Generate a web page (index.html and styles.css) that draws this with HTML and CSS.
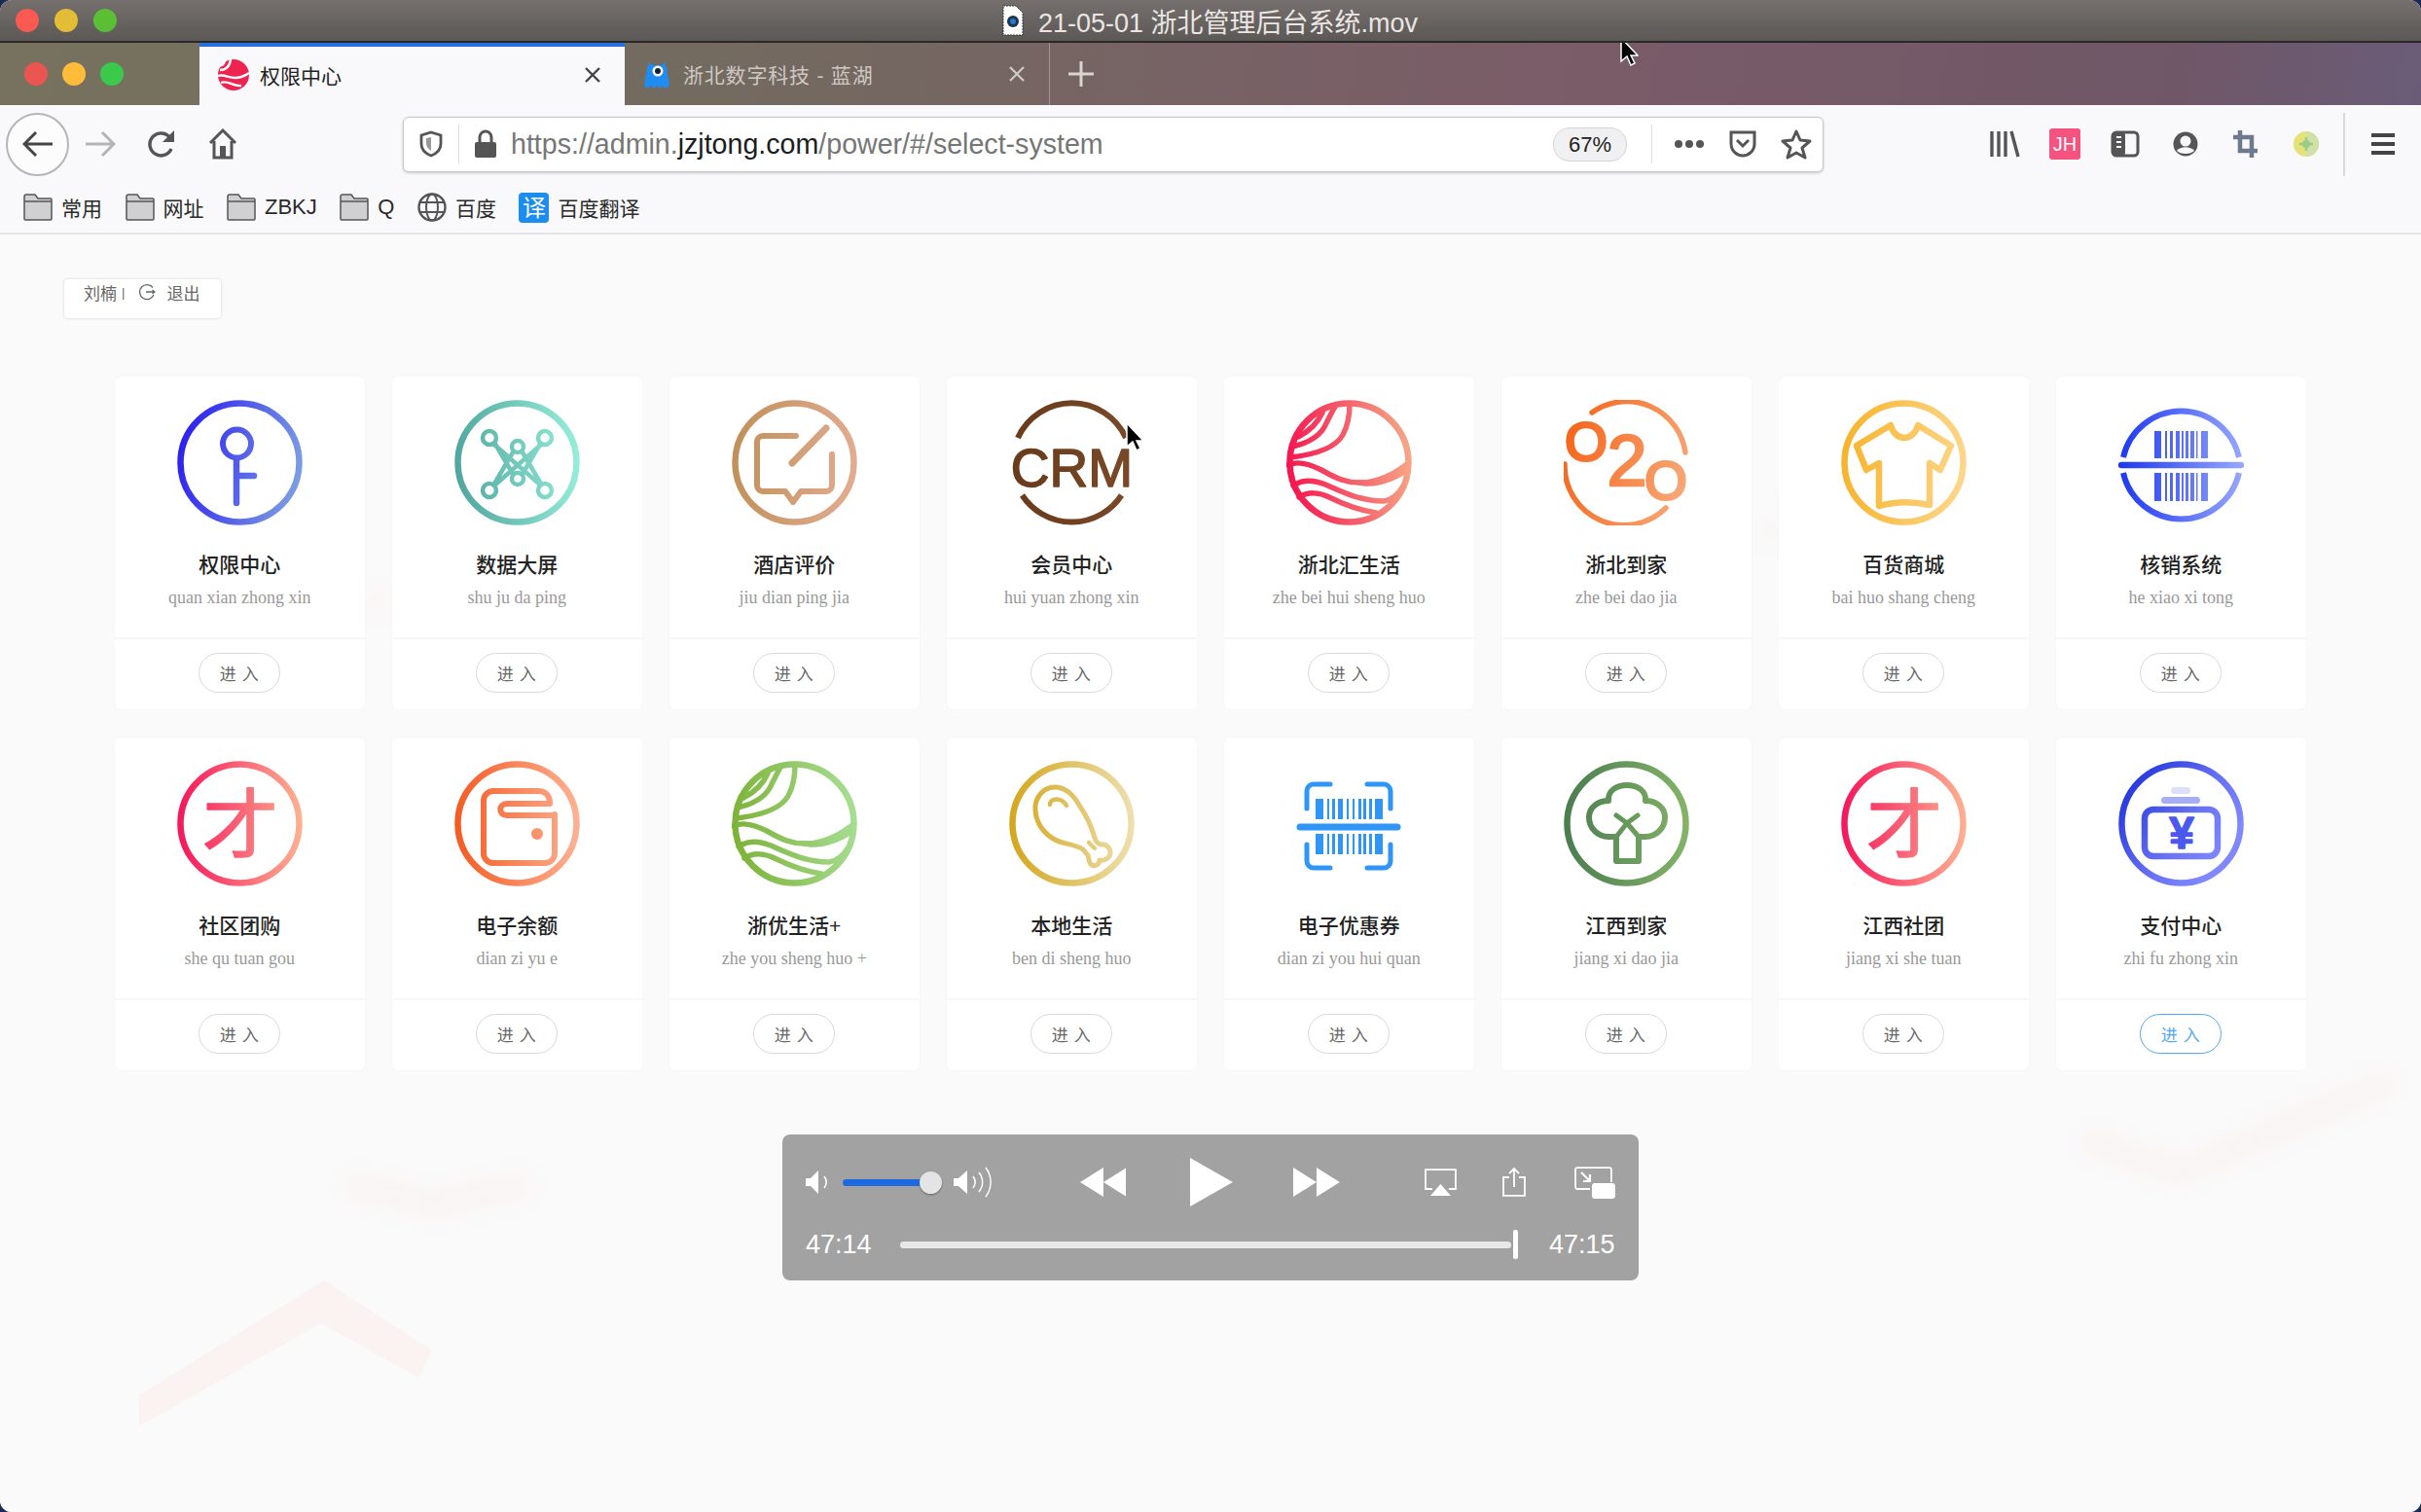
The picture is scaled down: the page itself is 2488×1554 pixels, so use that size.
FILE: index.html
```html
<!DOCTYPE html>
<html lang="en">

<head>
    <meta charset="UTF-8">
    <title>权限中心</title>
    <link rel="stylesheet" href="styles.css">
</head>

<body>
    <!-- shared gradients for the system icons -->
    <svg class="defs" width="0" height="0">
        <defs>
            <linearGradient id="g-key" gradientUnits="userSpaceOnUse" x1="0" y1="40" x2="129" y2="70"><stop offset="0" stop-color="#2a1cf0"/><stop offset="1" stop-color="#7c9ee2"/></linearGradient>
            <linearGradient id="g-teal" gradientUnits="userSpaceOnUse" x1="0" y1="60" x2="129" y2="50"><stop offset="0" stop-color="#50a69e"/><stop offset="1" stop-color="#96eeda"/></linearGradient>
            <linearGradient id="g-tan" gradientUnits="userSpaceOnUse" x1="0" y1="50" x2="129" y2="60"><stop offset="0" stop-color="#c09058"/><stop offset="1" stop-color="#e2ac92"/></linearGradient>
            <linearGradient id="g-red" gradientUnits="userSpaceOnUse" x1="0" y1="70" x2="129" y2="55"><stop offset="0" stop-color="#f5134f"/><stop offset="1" stop-color="#f6a886"/></linearGradient>
            <linearGradient id="g-orange" gradientUnits="userSpaceOnUse" x1="0" y1="40" x2="129" y2="80"><stop offset="0" stop-color="#f5651a"/><stop offset="1" stop-color="#f8a878"/></linearGradient>
            <linearGradient id="g-yellow" gradientUnits="userSpaceOnUse" x1="0" y1="50" x2="129" y2="60"><stop offset="0" stop-color="#f7b32a"/><stop offset="1" stop-color="#fdd78c"/></linearGradient>
            <linearGradient id="g-blue" gradientUnits="userSpaceOnUse" x1="0" y1="60" x2="129" y2="60"><stop offset="0" stop-color="#1c38f0"/><stop offset="1" stop-color="#98a8ff"/></linearGradient>
            <linearGradient id="g-pink" gradientUnits="userSpaceOnUse" x1="0" y1="60" x2="129" y2="60"><stop offset="0" stop-color="#f5155a"/><stop offset="1" stop-color="#ffb292"/></linearGradient>
            <linearGradient id="g-coral" gradientUnits="userSpaceOnUse" x1="0" y1="60" x2="129" y2="60"><stop offset="0" stop-color="#f45a22"/><stop offset="1" stop-color="#ffb294"/></linearGradient>
            <linearGradient id="g-green" gradientUnits="userSpaceOnUse" x1="0" y1="70" x2="129" y2="55"><stop offset="0" stop-color="#7cb236"/><stop offset="1" stop-color="#a8de94"/></linearGradient>
            <linearGradient id="g-gold" gradientUnits="userSpaceOnUse" x1="0" y1="60" x2="129" y2="60"><stop offset="0" stop-color="#d4a61c"/><stop offset="1" stop-color="#eee0b0"/></linearGradient>
            <linearGradient id="g-forest" gradientUnits="userSpaceOnUse" x1="0" y1="60" x2="129" y2="60"><stop offset="0" stop-color="#4a7c50"/><stop offset="1" stop-color="#84b468"/></linearGradient>
            <linearGradient id="g-indigo" gradientUnits="userSpaceOnUse" x1="10" y1="20" x2="110" y2="90"><stop offset="0" stop-color="#2236dc"/><stop offset="0.6" stop-color="#6670f4"/><stop offset="1" stop-color="#8088ff"/></linearGradient>
            <linearGradient id="g-crm" gradientUnits="userSpaceOnUse" x1="0" y1="60" x2="129" y2="60"><stop offset="0" stop-color="#683a1a"/><stop offset="1" stop-color="#7a4a28"/></linearGradient>
        </defs>
    </svg>

    <div class="window">
        <div class="titlebar">
            <span class="light red"></span>
            <span class="light yellow"></span>
            <span class="light green"></span>
            <svg class="movfile" viewBox="0 0 22 32" width="22" height="32">
                <path d="M1 1h13l7 7v23H1z" fill="#fff" stroke="#333" stroke-dasharray="2 1"/>
                <circle cx="11" cy="17" r="6" fill="#234"/>
                <circle cx="11" cy="17" r="3" fill="#1e78d8"/>
            </svg>
            <span class="filename">21-05-01 浙北管理后台系统.mov</span>
        </div>

        <div class="tabbar">
            <div class="lights">
                <span class="light t-red"></span>
                <span class="light t-yellow"></span>
                <span class="light t-green"></span>
            </div>
            <div class="tab active">
                <svg class="favicon" viewBox="0 0 32 32" width="32" height="32">
                    <circle cx="16" cy="16" r="16" fill="#ee2350"/>
                    <path d="M0 17c8-3 12 5 24 1 3-1 5-2 8-4M3 24c8-3 11 4 21 3M2 11c6 0 10-4 11-11M1 7c4-1 6-3 6-6" fill="none" stroke="#fff" stroke-width="2.4"/>
                </svg>
                <span class="tab-name">权限中心</span>
                <svg class="tab-close" viewBox="0 0 18 18" width="18" height="18"><path d="M2 2l14 14M16 2L2 16" stroke="#444" stroke-width="2.4"/></svg>
            </div>
            <div class="tab">
                <svg class="favicon" viewBox="0 0 28 32" width="28" height="32">
                    <path d="M6 4l3 3h10l3-3 2 6 3 18-4 3-3-3-3 3-3-3-3 3-3-3-4 3-3-3 3-18z" fill="#1e8cf0"/>
                    <circle cx="15" cy="13" r="5.5" fill="#fff"/>
                    <circle cx="15" cy="13" r="3" fill="#123"/>
                </svg>
                <span class="tab-name">浙北数字科技 - 蓝湖</span>
                <svg class="tab-close" viewBox="0 0 18 18" width="18" height="18"><path d="M2 2l14 14M16 2L2 16" stroke="#d0ccc8" stroke-width="2.2"/></svg>
            </div>
            <svg class="newtab" viewBox="0 0 28 28" width="28" height="28"><path d="M14 1v26M1 14h26" stroke="#d8d4d0" stroke-width="3"/></svg>
            <svg class="cursor cursor-top" viewBox="0 0 20 30" width="20" height="30"><path d="M2 1v24l6-5 4 9 4-2-4-8h7z" fill="#000" stroke="#fff" stroke-width="1.5"/></svg>
        </div>

        <div class="toolbar">
            <div class="back">
                <svg viewBox="0 0 32 28" width="32" height="28"><path d="M14 2L2 14l12 12M2 14h29" fill="none" stroke="#444" stroke-width="3"/></svg>
            </div>
            <div class="tool">
                <svg viewBox="0 0 32 28" width="32" height="28"><path d="M18 2l12 12-12 12M30 14H1" fill="none" stroke="#b4b4b6" stroke-width="3"/></svg>
            </div>
            <div class="tool">
                <svg viewBox="0 0 30 30" width="30" height="30"><path d="M25 20a11.500 11.500 0 1 1-1-11" fill="none" stroke="#555" stroke-width="3.400"/><path d="M28 1v12H16z" fill="#555"/></svg>
            </div>
            <div class="tool">
                <svg viewBox="0 0 30 32" width="30" height="32"><path d="M2 15L15 2l13 13M6 13v17h18V13" fill="none" stroke="#555" stroke-width="3"/><rect x="12" y="18" width="6" height="12" fill="#555"/></svg>
            </div>

            <div class="urlbar">
                <div class="url-shield">
                    <svg viewBox="0 0 24 28" width="24" height="28"><path d="M12 2l10 3v9c0 6-5 10-10 12C7 24 2 20 2 14V5z" fill="none" stroke="#555" stroke-width="2.800"/><path d="M12 7v14c-3-2-5-4-5-8V8z" fill="#999"/></svg>
                </div>
                <div class="url-sep"></div>
                <div class="url-lock">
                    <svg viewBox="0 0 24 30" width="24" height="30"><path d="M6 14V8a6 6 0 0 1 12 0v6" fill="none" stroke="#555" stroke-width="3"/><rect x="1" y="13" width="22" height="16" rx="2" fill="#555"/></svg>
                </div>
                <div class="url-text">https://admin.<b>jzjtong.com</b>/power/#/select-system</div>
                <div class="zoom-badge">67%</div>
                <div class="url-sep wide"></div>
                <div class="url-tool">
                    <svg viewBox="0 0 32 10" width="32" height="10"><circle cx="5" cy="5" r="4" fill="#555"/><circle cx="16" cy="5" r="4" fill="#555"/><circle cx="27" cy="5" r="4" fill="#555"/></svg>
                </div>
                <div class="url-tool">
                    <svg viewBox="0 0 30 28" width="30" height="28"><path d="M3 2h24v12c0 7-6 12-12 12S3 21 3 14z" fill="none" stroke="#555" stroke-width="3"/><path d="M9 10l6 6 6-6" fill="none" stroke="#555" stroke-width="3"/></svg>
                </div>
                <div class="url-tool">
                    <svg viewBox="0 0 32 32" width="32" height="32"><path d="M16 3l4 9 10 1-8 7 3 10-9-5-9 5 3-10-8-7 10-1z" fill="none" stroke="#555" stroke-width="3" stroke-linejoin="round"/></svg>
                </div>
            </div>

            <div class="rtool first">
                <svg viewBox="0 0 32 28" width="32" height="28"><path d="M3 1v26M10 1v26M17 1v26M23 1l7 26" stroke="#555" stroke-width="3.400"/></svg>
            </div>
            <div class="rtool">
                <span class="jh">JH</span>
            </div>
            <div class="rtool">
                <svg viewBox="0 0 30 28" width="30" height="28"><rect x="2" y="2" width="26" height="24" rx="4" fill="none" stroke="#555" stroke-width="3"/><rect x="2" y="2" width="13" height="24" rx="3" fill="#555"/><path d="M6 7h5M6 12h5M6 17h5" stroke="#f9f9fb" stroke-width="2"/></svg>
            </div>
            <div class="rtool">
                <svg viewBox="0 0 28 28" width="28" height="28"><circle cx="14" cy="14" r="12.500" fill="#555"/><circle cx="14" cy="11" r="5.500" fill="#f9f9fb"/><path d="M5 21c4-5 14-5 18 0-4 4-14 4-18 0z" fill="#f9f9fb"/></svg>
            </div>
            <div class="rtool">
                <svg viewBox="0 0 28 30" width="28" height="30"><path d="M8 1v21h18M1 8h19v21" fill="none" stroke="#6e7a8c" stroke-width="4.500"/></svg>
            </div>
            <div class="rtool">
                <svg viewBox="0 0 28 28" width="28" height="28"><circle cx="14" cy="14" r="13" fill="#e6e27a"/><path d="M14 1a13 13 0 0 1 0 26" fill="#cfe0a8"/><circle cx="14" cy="14" r="4" fill="#9ccb86"/><path d="M14 7v14M7 14h14" stroke="#9ccb86" stroke-width="2.500"/></svg>
            </div>
            <div class="tool-sep"></div>
            <div class="rtool menu">
                <svg viewBox="0 0 26 24" width="26" height="24"><path d="M1 3h24M1 12h24M1 21h24" stroke="#444" stroke-width="4"/></svg>
            </div>
        </div>

        <div class="bookmarks">
            <div class="bm">
                <svg class="folder" viewBox="0 0 30 28" width="30" height="28"><path d="M1 3a2 2 0 0 1 2-2h9l3 4h13a1 1 0 0 1 1 1v20a1 1 0 0 1-1 1H2a1 1 0 0 1-1-1z" fill="#d0d0d2" stroke="#555" stroke-width="1.500"/><path d="M1 8h28" stroke="#555" stroke-width="1.500"/></svg>
                <span>常用</span>
            </div>
            <div class="bm">
                <svg class="folder" viewBox="0 0 30 28" width="30" height="28"><path d="M1 3a2 2 0 0 1 2-2h9l3 4h13a1 1 0 0 1 1 1v20a1 1 0 0 1-1 1H2a1 1 0 0 1-1-1z" fill="#d0d0d2" stroke="#555" stroke-width="1.500"/><path d="M1 8h28" stroke="#555" stroke-width="1.500"/></svg>
                <span>网址</span>
            </div>
            <div class="bm">
                <svg class="folder" viewBox="0 0 30 28" width="30" height="28"><path d="M1 3a2 2 0 0 1 2-2h9l3 4h13a1 1 0 0 1 1 1v20a1 1 0 0 1-1 1H2a1 1 0 0 1-1-1z" fill="#d0d0d2" stroke="#555" stroke-width="1.500"/><path d="M1 8h28" stroke="#555" stroke-width="1.500"/></svg>
                <span class="latin">ZBKJ</span>
            </div>
            <div class="bm">
                <svg class="folder" viewBox="0 0 30 28" width="30" height="28"><path d="M1 3a2 2 0 0 1 2-2h9l3 4h13a1 1 0 0 1 1 1v20a1 1 0 0 1-1 1H2a1 1 0 0 1-1-1z" fill="#d0d0d2" stroke="#555" stroke-width="1.500"/><path d="M1 8h28" stroke="#555" stroke-width="1.500"/></svg>
                <span class="latin">Q</span>
            </div>
            <div class="bm">
                <svg class="folder" viewBox="0 0 30 30" width="30" height="30"><circle cx="15" cy="15" r="13.500" fill="none" stroke="#555" stroke-width="2.400"/><ellipse cx="15" cy="15" rx="6" ry="13.500" fill="none" stroke="#555" stroke-width="2"/><path d="M2 10h26M2 20h26" stroke="#555" stroke-width="2"/></svg>
                <span>百度</span>
            </div>
            <div class="bm">
                <span class="fanyi">译</span>
                <span>百度翻译</span>
            </div>
        </div>

        <main class="page">
            <svg class="marks" viewBox="0 0 2488 1312" width="2488" height="1312">
                <defs>
                    <filter id="soft"><feGaussianBlur stdDeviation="14"/></filter>
                </defs>
                <path d="M143 1193L333 1075l111 72-14 28-100-56-187 106z" fill="#fbf2f2"/>
                <g filter="url(#soft)" fill="none" stroke="#fbeeee" stroke-width="16">
                    <path d="M2140 930l100 34 220-95"/>
                    <path d="M355 975l90 22 100-22"/>
                    <path d="M380 385l15-15"/>
                    <path d="M1810 310l20-8"/>
                </g>
            </svg>

            <div class="userbox">
                <span>刘楠</span>
                <span class="pipe">|</span>
                <svg class="logout" viewBox="0 0 18 18" width="18" height="18"><path d="M15 4.500A7.500 7.500 0 1 0 16 12M8 9h9M14.500 7l2.500 2-2.500 2" fill="none" stroke="#666" stroke-width="1.300"/></svg>
                <span>退出</span>
            </div>

            <div class="systems">
                <div class="card">
                    <div class="card-body">
                        <svg class="sys-icon" viewBox="0 0 129 129" stroke="url(#g-key)">
                            <circle class="ring" cx="64.500" cy="64.500" r="61"/>
                            <circle cx="61.500" cy="45" r="14.500" stroke-width="6"/>
                            <path d="M61 60v46M61 78h18" stroke-width="6.500"/>
                        </svg>
                        <h3>权限中心</h3>
                        <p>quan xian zhong xin</p>
                    </div>
                    <div class="card-foot"><button>进 入</button></div>
                </div>
                <div class="card">
                    <div class="card-body">
                        <svg class="sys-icon" viewBox="0 0 129 129" stroke="url(#g-teal)">
                            <circle class="ring" cx="64.500" cy="64.500" r="61"/>
                            <g stroke-width="4.500">
                                <path d="M41 46l48 42M89 46L41 88M60 54L40 88M70 54l20 34M60 76L40 42M70 76l20-34"/>
                                <circle cx="36" cy="39" r="7" fill="#fff"/>
                                <circle cx="93" cy="39" r="7" fill="#fff"/>
                                <circle cx="36" cy="93" r="7" fill="#fff"/>
                                <circle cx="93" cy="93" r="7" fill="#fff"/>
                                <circle cx="65" cy="48" r="6" fill="#fff"/>
                                <circle cx="65" cy="81" r="6" fill="#fff"/>
                            </g>
                        </svg>
                        <h3>数据大屏</h3>
                        <p>shu ju da ping</p>
                    </div>
                    <div class="card-foot"><button>进 入</button></div>
                </div>
                <div class="card">
                    <div class="card-body">
                        <svg class="sys-icon" viewBox="0 0 129 129" stroke="url(#g-tan)">
                            <circle class="ring" cx="64.500" cy="64.500" r="61"/>
                            <path d="M66 37H32a6 6 0 0 0-6 6v45a6 6 0 0 0 6 6h23l8 11 8-11h26a6 6 0 0 0 6-6V56" stroke-width="6"/>
                            <path d="M62 65l35-36" stroke-width="7"/>
                        </svg>
                        <h3>酒店评价</h3>
                        <p>jiu dian ping jia</p>
                    </div>
                    <div class="card-foot"><button>进 入</button></div>
                </div>
                <div class="card">
                    <div class="card-body">
                        <svg class="sys-icon" viewBox="0 0 129 129" stroke="url(#g-crm)">
                            <path d="M9 39a61 61 0 0 1 111 0M13.500 98a61 61 0 0 0 102 0" stroke-width="6" stroke-linecap="butt"/>
                            <text class="crm" x="64.500" y="89" fill="url(#g-crm)">CRM</text>
                        </svg>
                        <h3>会员中心</h3>
                        <p>hui yuan zhong xin</p>
                    </div>
                    <div class="card-foot"><button>进 入</button></div>
                </div>
                <div class="card">
                    <div class="card-body">
                        <svg class="sys-icon" viewBox="0 0 129 129" stroke="url(#g-red)">
                            <circle class="ring" cx="64.500" cy="64.500" r="61"/>
                            <g stroke-width="5.500">
                                <path d="M5 59C30 56 50 50 58 36 64 25 65 12 65 4"/>
                                <path d="M6 48C24 44 36 36 41 24 45 16 48 10 50 7"/>
                                <path d="M12 38C24 32 32 24 37 13"/>
                                <path d="M2 67C12 62 24 66 36 72 50 80 62 86 78 85"/>
                                <path d="M7 88C16 82 28 82 40 87 56 94 76 104 100 104 108 103 114 98 119 90"/>
                                <path d="M13 100C22 94 34 95 44 100 56 106 72 113 92 116"/>
                            </g>
                            <path d="M72 82C88 84 108 76 127 60L126 74C108 86 88 92 72 87z" fill="url(#g-red)" stroke="none"/>
                        </svg>
                        <h3>浙北汇生活</h3>
                        <p>zhe bei hui sheng huo</p>
                    </div>
                    <div class="card-foot"><button>进 入</button></div>
                </div>
                <div class="card">
                    <div class="card-body">
                        <svg class="sys-icon" viewBox="0 0 129 129" stroke="url(#g-orange)">
                            <path d="M29 13a61 61 0 0 1 96 41M105 111A61 61 0 0 1 1 66" stroke-width="5.500"/>
                            <text class="o2o big-o" x="23" y="62" fill="url(#g-orange)">O</text>
                            <text class="o2o two" x="65" y="88" fill="url(#g-orange)">2</text>
                            <text class="o2o big-o" x="105" y="102" fill="url(#g-orange)">O</text>
                        </svg>
                        <h3>浙北到家</h3>
                        <p>zhe bei dao jia</p>
                    </div>
                    <div class="card-foot"><button>进 入</button></div>
                </div>
                <div class="card">
                    <div class="card-body">
                        <svg class="sys-icon" viewBox="0 0 129 129" stroke="url(#g-yellow)">
                            <circle class="ring" cx="64.500" cy="64.500" r="61"/>
                            <path d="M51 26c2 8 8 13 14 13s12-5 14-13l34 21-11 25-11-7v43c-18-4-34-4-52 1V65l-13 7-10-25z" stroke-width="6.500" stroke-linejoin="round"/>
                        </svg>
                        <h3>百货商城</h3>
                        <p>bai huo shang cheng</p>
                    </div>
                    <div class="card-foot"><button>进 入</button></div>
                </div>
                <div class="card">
                    <div class="card-body">
                        <svg class="sys-icon" viewBox="0 0 129 129" stroke="url(#g-blue)">
                            <path d="M5 59a61 61 0 0 1 119 0M5 75a61 61 0 0 0 119 0" stroke-width="6" stroke-linecap="butt"/>
                            <path d="M3 67h123" stroke-width="6.500"/>
                            <g stroke="none" fill="url(#g-blue)">
                                <rect x="37" y="32" width="7" height="28"/><rect x="48" y="32" width="2" height="28"/><rect x="53" y="32" width="3" height="28"/><rect x="59" y="32" width="4" height="28"/><rect x="65" y="32" width="2" height="28"/><rect x="69" y="32" width="3" height="28"/><rect x="74" y="32" width="4" height="28"/><rect x="80" y="32" width="1.500" height="28"/><rect x="85" y="32" width="7" height="28"/>
                                <rect x="37" y="75" width="7" height="29"/><rect x="48" y="75" width="2" height="29"/><rect x="53" y="75" width="3" height="29"/><rect x="59" y="75" width="4" height="29"/><rect x="65" y="75" width="2" height="29"/><rect x="69" y="75" width="3" height="29"/><rect x="74" y="75" width="4" height="29"/><rect x="80" y="75" width="1.500" height="29"/><rect x="85" y="75" width="7" height="29"/>
                            </g>
                        </svg>
                        <h3>核销系统</h3>
                        <p>he xiao xi tong</p>
                    </div>
                    <div class="card-foot"><button>进 入</button></div>
                </div>

                <div class="card">
                    <div class="card-body">
                        <svg class="sys-icon" viewBox="0 0 129 129" stroke="url(#g-pink)">
                            <circle class="ring" cx="64.500" cy="64.500" r="61" stroke-width="5.500"/>
                            <text class="cai" x="65" y="94" fill="url(#g-pink)">才</text>
                        </svg>
                        <h3>社区团购</h3>
                        <p>she qu tuan gou</p>
                    </div>
                    <div class="card-foot"><button>进 入</button></div>
                </div>
                <div class="card">
                    <div class="card-body">
                        <svg class="sys-icon" viewBox="0 0 129 129" stroke="url(#g-coral)">
                            <circle class="ring" cx="64.500" cy="64.500" r="61"/>
                            <path d="M103 55V95a10 10 0 0 1-10 10H40a10 10 0 0 1-10-10V41a10 10 0 0 1 10-10h46c8 0 12 5 12 12" stroke-width="6"/>
                            <path d="M103 56H54c-9 0-9-12 0-12h44" stroke-width="6"/>
                            <circle cx="85" cy="75" r="6" fill="url(#g-coral)" stroke="none"/>
                        </svg>
                        <h3>电子余额</h3>
                        <p>dian zi yu e</p>
                    </div>
                    <div class="card-foot"><button>进 入</button></div>
                </div>
                <div class="card">
                    <div class="card-body">
                        <svg class="sys-icon" viewBox="0 0 129 129" stroke="url(#g-green)">
                            <circle class="ring" cx="64.500" cy="64.500" r="61"/>
                            <g stroke-width="5.500">
                                <path d="M5 59C30 56 50 50 58 36 64 25 65 12 65 4"/>
                                <path d="M6 48C24 44 36 36 41 24 45 16 48 10 50 7"/>
                                <path d="M12 38C24 32 32 24 37 13"/>
                                <path d="M2 67C12 62 24 66 36 72 50 80 62 86 78 85"/>
                                <path d="M7 88C16 82 28 82 40 87 56 94 76 104 100 104 108 103 114 98 119 90"/>
                                <path d="M13 100C22 94 34 95 44 100 56 106 72 113 92 116"/>
                            </g>
                            <path d="M72 82C88 84 108 76 127 60L126 74C108 86 88 92 72 87z" fill="url(#g-green)" stroke="none"/>
                        </svg>
                        <h3>浙优生活+</h3>
                        <p>zhe you sheng huo +</p>
                    </div>
                    <div class="card-foot"><button>进 入</button></div>
                </div>
                <div class="card">
                    <div class="card-body">
                        <svg class="sys-icon" viewBox="0 0 129 129" stroke="url(#g-gold)">
                            <circle class="ring" cx="64.500" cy="64.500" r="61"/>
                            <path d="M47 27c-12 0-21 11-20 24 1 16 13 29 28 33 8 2 15 3 21 7l5 6c1 3 1 8 4 10 4 2 8-1 8-5 5 1 11-2 11-8 0-5-5-9-10-8-3-1-5-3-6-7-3-10-8-22-15-32-6-11-15-20-26-20z" stroke-width="5" stroke-linejoin="round"/>
                            <path d="M42 45c0-7 12-8 17 1" stroke-width="4.500"/>
                            <path d="M82 84l6 6" stroke-width="4.500"/>
                        </svg>
                        <h3>本地生活</h3>
                        <p>ben di sheng huo</p>
                    </div>
                    <div class="card-foot"><button>进 入</button></div>
                </div>
                <div class="card">
                    <div class="card-body">
                        <svg class="sys-icon" viewBox="0 0 129 129" stroke="#2f96f8">
                            <path d="M45 24H28a7 7 0 0 0-7 7v18M83 24h17a7 7 0 0 1 7 7v18M45 110H28a7 7 0 0 1-7-7V86M83 110h17a7 7 0 0 0 7-7V86" stroke-width="5"/>
                            <path d="M14 68h100" stroke-width="7"/>
                            <g stroke="none" fill="#2f96f8">
                                <rect x="30" y="39" width="8" height="21"/><rect x="42" y="39" width="2" height="21"/><rect x="47" y="39" width="3" height="21"/><rect x="53" y="39" width="5" height="21"/><rect x="62" y="39" width="2" height="21"/><rect x="68" y="39" width="2" height="21"/><rect x="74" y="39" width="3" height="21"/><rect x="79" y="39" width="3" height="21"/><rect x="85" y="39" width="3" height="21"/><rect x="91" y="39" width="8" height="21"/>
                                <rect x="30" y="75" width="8" height="21"/><rect x="42" y="75" width="2" height="21"/><rect x="47" y="75" width="3" height="21"/><rect x="53" y="75" width="5" height="21"/><rect x="62" y="75" width="2" height="21"/><rect x="68" y="75" width="2" height="21"/><rect x="74" y="75" width="3" height="21"/><rect x="79" y="75" width="3" height="21"/><rect x="85" y="75" width="3" height="21"/><rect x="91" y="75" width="8" height="21"/>
                            </g>
                        </svg>
                        <h3>电子优惠券</h3>
                        <p>dian zi you hui quan</p>
                    </div>
                    <div class="card-foot"><button>进 入</button></div>
                </div>
                <div class="card">
                    <div class="card-body">
                        <svg class="sys-icon" viewBox="0 0 129 129" stroke="url(#g-forest)">
                            <circle class="ring" cx="64.500" cy="64.500" r="61"/>
                            <path d="M54 78H46C35 78 26 69 26 58 26 48 35 41 46 41 45 31 54 25 65 25 76 25 85 31 84 41 95 41 104 48 104 58 104 69 95 78 84 78H77V103H54z" stroke-width="6" stroke-linejoin="round"/>
                            <path d="M54 56l11 8 11-8M65 64L54 78M65 64l12 14" stroke-width="5"/>
                        </svg>
                        <h3>江西到家</h3>
                        <p>jiang xi dao jia</p>
                    </div>
                    <div class="card-foot"><button>进 入</button></div>
                </div>
                <div class="card">
                    <div class="card-body">
                        <svg class="sys-icon" viewBox="0 0 129 129" stroke="url(#g-pink)">
                            <circle class="ring" cx="64.500" cy="64.500" r="61" stroke-width="5.500"/>
                            <text class="cai" x="65" y="94" fill="url(#g-pink)">才</text>
                        </svg>
                        <h3>江西社团</h3>
                        <p>jiang xi she tuan</p>
                    </div>
                    <div class="card-foot"><button>进 入</button></div>
                </div>
                <div class="card">
                    <div class="card-body">
                        <svg class="sys-icon" viewBox="0 0 129 129" stroke="url(#g-indigo)">
                            <circle class="ring" cx="64.500" cy="64.500" r="61"/>
                            <rect x="27" y="50" width="75" height="48" rx="9" stroke-width="6.500"/>
                            <rect x="44" y="37" width="40" height="7" rx="3.500" fill="#a8aef4" stroke="none"/>
                            <rect x="54" y="27" width="20" height="7" rx="3.500" fill="#dcdefa" stroke="none"/>
                            <text class="yen" x="65" y="90" fill="#4b58ee" stroke="#4b58ee">¥</text>
                        </svg>
                        <h3>支付中心</h3>
                        <p>zhi fu zhong xin</p>
                    </div>
                    <div class="card-foot"><button class="on">进 入</button></div>
                </div>
            </div>

            <svg class="cursor cursor-page" viewBox="0 0 20 30" width="20" height="30"><path d="M2 1v24l6-5 4 9 4-2-4-8h7z" fill="#000" stroke="#fff" stroke-width="1.500"/></svg>

            <div class="player">
                <div class="player-top">
                    <svg class="vol-low" viewBox="0 0 26 24" width="26" height="24"><path d="M0 8h5l8-8v24l-8-8H0z" fill="#fff"/><path d="M19 6c3 4 3 8 0 12" fill="none" stroke="#fff" stroke-width="1.500"/></svg>
                    <div class="slider"><div class="slider-fill"></div><div class="slider-thumb"></div></div>
                    <svg class="vol-high" viewBox="0 0 42 32" width="42" height="32"><path d="M0 12h5l9-8v24l-9-8H0z" fill="#fff"/><path d="M20 10c3 4 3 8 0 12M26 6c5 6 5 14 0 20M33 1c7 9 7 21 0 30" fill="none" stroke="#fff" stroke-width="1.500"/></svg>
                    <svg class="rew" viewBox="0 0 48 30" width="48" height="30"><path d="M24 0v30L0 15zM48 0v30L24 15z" fill="#fff"/></svg>
                    <svg class="play" viewBox="0 0 44 50" width="44" height="50"><path d="M0 0l44 25L0 50z" fill="#fff"/></svg>
                    <svg class="ff" viewBox="0 0 48 30" width="48" height="30"><path d="M0 0v30l24-15zM24 0v30l24-15z" fill="#fff"/></svg>
                    <svg class="airplay" viewBox="0 0 33 28" width="33" height="28"><path d="M8 21H1V1h31v20h-7" fill="none" stroke="#fff" stroke-width="1.800"/><path d="M16.500 16L27 28H6z" fill="#fff"/></svg>
                    <svg class="share" viewBox="0 0 24 30" width="24" height="30"><path d="M7 10H1v19h22V10h-6M12 20V1M7 6l5-5 5 5" fill="none" stroke="#fff" stroke-width="1.800"/></svg>
                    <svg class="pip" viewBox="0 0 42 33" width="42" height="33"><path d="M16 23H3a2 2 0 0 1-2-2V3a2 2 0 0 1 2-2h33a2 2 0 0 1 2 2v13" fill="none" stroke="#fff" stroke-width="1.800"/><path d="M7 6l9 9M16 8v7H9" fill="none" stroke="#fff" stroke-width="2.200"/><rect x="18" y="17" width="24" height="16" rx="3" fill="#fff"/></svg>
                </div>
                <div class="player-bottom">
                    <span class="time">47:14</span>
                    <div class="scrub"><div class="scrub-head"></div></div>
                    <span class="time">47:15</span>
                </div>
            </div>
        </main>
    </div>
</body>

</html>
```
FILE: styles.css
```css
html,
body {
    margin: 0;
    width: 2488px;
    height: 1554px;
    overflow: hidden;
}

body {
    background: #1b2a55;
    font-family: "Liberation Sans", "Noto Sans CJK SC", sans-serif;
}

.defs {
    position: absolute;
}

.window {
    display: flex;
    flex-direction: column;
    height: 1554px;
    border-radius: 12px;
    overflow: hidden;
    background: #fafafa;
}

/* title bar of the video player */
.titlebar {
    display: flex;
    align-items: center;
    flex: none;
    height: 42px;
    padding-left: 16px;
    background: linear-gradient(#75706d, #5c5856);
    border-bottom: 2px solid #2b2927;
}

.light {
    width: 24px;
    height: 24px;
    margin-right: 16px;
    border-radius: 50%;
}

.red { background: #fb5a53; }
.yellow { background: #e4bd36; }
.green { background: #5abf35; }
.t-red { background: #ea5552; }
.t-yellow { background: #febc3a; }
.t-green { background: #3bc94b; }

.movfile {
    margin-left: 894px;
    margin-right: 15px;
}

.filename {
    color: #ebe6e4;
    font-size: 27px;
}

/* browser tabs */
.tabbar {
    position: relative;
    display: flex;
    align-items: stretch;
    flex: none;
    height: 64px;
    overflow: hidden;
    background: linear-gradient(100deg, #77725f 0%, #736a60 30%, #7a5c68 65%, #6f5767 90%, #6a5c78 100%);
}

.lights {
    display: flex;
    align-items: center;
    width: 205px;
    padding-left: 25px;
    box-sizing: border-box;
}

.lights .light {
    margin-right: 15px;
}

.tab {
    display: flex;
    align-items: center;
    box-sizing: border-box;
    width: 437px;
    padding: 0 24px 0 19px;
    color: #ccc8c3;
    font-size: 21px;
    letter-spacing: 0.8px;
    border-right: 1px solid #a09890;
}

.tab.active {
    width: 437px;
    padding-bottom: 3px;
    color: #222;
    letter-spacing: 0;
    background: #f9f9fb;
    border-top: 4px solid #2a6fe0;
    border-right: 0;
}

.favicon {
    flex: none;
    margin-right: 13px;
}

.tab.active .favicon {
    margin-right: 11px;
}

.tab-name {
    flex: 1;
}

.newtab {
    margin: 18px 0 0 18px;
}

.cursor {
    position: absolute;
}

.cursor-top {
    left: 1664px;
    top: -6px;
}

/* nav toolbar */
.toolbar {
    display: flex;
    align-items: center;
    flex: none;
    height: 82px;
    padding: 0 0 2px 6px;
    box-sizing: border-box;
    background: #f9f9fb;
}

.back {
    display: flex;
    flex: none;
    align-items: center;
    justify-content: center;
    width: 65px;
    height: 65px;
    box-sizing: border-box;
    border: 2px solid #b5b5b7;
    border-radius: 50%;
    background: #fcfcfd;
}

.tool {
    display: flex;
    flex: none;
    align-items: center;
    justify-content: center;
    width: 63px;
}

.rtool {
    display: flex;
    flex: none;
    align-items: center;
    justify-content: center;
    width: 62px;
}

.rtool.first {
    margin-left: 155px;
}

.tool-sep {
    flex: none;
    width: 2px;
    height: 65px;
    margin-left: 7px;
    background: #d8d8da;
}

.rtool.menu {
    width: 78px;
}

.jh {
    width: 32px;
    height: 32px;
    color: #fff;
    font-size: 20px;
    line-height: 32px;
    text-align: center;
    border-radius: 3px;
    background: #f5537f;
}

.urlbar {
    display: flex;
    flex: none;
    align-items: center;
    box-sizing: border-box;
    width: 1460px;
    height: 57px;
    margin-left: 154px;
    background: #fff;
    border: 1px solid #c8c8ca;
    border-radius: 6px;
    box-shadow: 0 1px 3px rgba(0, 0, 0, 0.2);
}

.url-shield {
    display: flex;
    justify-content: center;
    width: 56px;
}

.url-sep {
    width: 1px;
    height: 40px;
    background: #dcdcde;
}

.url-sep.wide {
    margin-left: 25px;
    margin-right: 10px;
}

.url-lock {
    display: flex;
    justify-content: center;
    width: 53px;
}

.url-text {
    flex: 1;
    color: #767676;
    font-size: 28.6px;
    white-space: nowrap;
}

.url-text b {
    color: #1c1c1c;
    font-weight: normal;
}

.zoom-badge {
    box-sizing: border-box;
    width: 76px;
    height: 35px;
    color: #222;
    font-size: 22px;
    line-height: 33px;
    text-align: center;
    background: #f0f0f2;
    border: 1px solid #d4d4d6;
    border-radius: 17px;
}

.url-tool {
    display: flex;
    justify-content: center;
    width: 55px;
}

/* bookmarks */
.bookmarks {
    display: flex;
    align-items: center;
    flex: none;
    height: 51px;
    padding: 0 0 3px 24px;
    box-sizing: border-box;
    color: #2a2a2a;
    font-size: 21px;
    background: #f9f9fb;
    border-bottom: 2px solid #e4e4e6;
}

.bm {
    display: flex;
    align-items: center;
    margin-right: 23.5px;
}

.bm .latin {
    font-size: 22px;
}

.folder {
    margin-right: 9px;
}

.fanyi {
    width: 31px;
    height: 31px;
    margin-right: 9px;
    color: #fff;
    font-size: 24px;
    line-height: 31px;
    text-align: center;
    border-radius: 4px;
    background: #1b8cf2;
}

/* page content */
.page {
    position: relative;
    flex: 1;
    padding-top: 46px;
    background: #fafafa;
}

.marks {
    position: absolute;
    left: 0;
    top: 0;
}

.userbox {
    position: relative;
    display: flex;
    align-items: center;
    box-sizing: border-box;
    width: 161px;
    height: 40px;
    margin-left: 66px;
    padding: 0 0 14px 20px;
    color: #666;
    font-size: 17px;
    background: #fff;
    border-radius: 4px;
    box-shadow: 0 0 3px rgba(0, 0, 0, 0.18);
}

.pipe {
    margin: 0 14px 0 5px;
    font-size: 13px;
}

.logout {
    margin-right: 11px;
}

.systems {
    position: relative;
    display: grid;
    grid-template-columns: repeat(8, 257.5px);
    column-gap: 27.5px;
    row-gap: 29px;
    margin: 60px 0 0 117.5px;
}

.card {
    height: 342px;
    background: #fff;
    border-radius: 6px;
    box-shadow: 0 0 2px rgba(0, 0, 0, 0.05);
}

.card-body {
    display: flex;
    flex-direction: column;
    align-items: center;
    box-sizing: border-box;
    height: 270px;
    padding-top: 24px;
    border-bottom: 2px solid #f7f7f7;
}

.sys-icon {
    flex: none;
    width: 129px;
    height: 129px;
    fill: none;
    stroke-linecap: round;
    stroke-linejoin: round;
}

.ring {
    stroke-width: 6.5;
}

.crm {
    font-family: "Liberation Sans", sans-serif;
    font-size: 55px;
    stroke-width: 1.6;
    text-anchor: middle;
}

.o2o {
    font-family: "Liberation Sans", sans-serif;
    text-anchor: middle;
}

.big-o {
    font-size: 56px;
    stroke-width: 3.2;
    stroke-linecap: butt;
}

.two {
    font-size: 74px;
    stroke-width: 2.4;
}

.cai {
    font-family: "Noto Sans CJK SC", sans-serif;
    font-size: 78px;
    stroke-width: 1.4;
    text-anchor: middle;
}

.yen {
    font-family: "Liberation Sans", sans-serif;
    font-size: 46px;
    font-weight: bold;
    stroke-width: 1.6;
    text-anchor: middle;
}

.card h3 {
    margin: 27px 0 0;
    color: #222;
    font-size: 21px;
    font-weight: 500;
    line-height: 28px;
}

.card p {
    margin: 8px 0 0;
    color: #999;
    font-family: "Liberation Serif", serif;
    font-size: 18px;
    line-height: 22px;
}

.card-foot {
    display: flex;
    justify-content: center;
    padding-top: 14px;
}

button {
    box-sizing: border-box;
    width: 84px;
    height: 41px;
    padding: 0;
    color: #666;
    font-family: "Noto Sans CJK SC", sans-serif;
    font-size: 17px;
    letter-spacing: 1px;
    background: #fff;
    border: 1px solid #d9d9d9;
    border-radius: 21px;
}

button.on {
    color: #52a8ee;
    border-color: #52a8ee;
}

.cursor-page {
    left: 1156px;
    top: 193px;
}

/* quicktime style controls, floats over the page */
.player {
    position: absolute;
    left: 804px;
    top: 925px;
    box-sizing: border-box;
    width: 880px;
    height: 150px;
    padding: 18px 24px 0;
    background: #a2a2a2;
    border-radius: 8px;
}

.player-top {
    display: flex;
    align-items: center;
    height: 62px;
}

.slider {
    position: relative;
    width: 90px;
    height: 7px;
    margin: 0 24px 0 12px;
    background: #1d6ae0;
    border-radius: 4px;
}

.slider-thumb {
    position: absolute;
    right: -12px;
    top: -8px;
    width: 23px;
    height: 23px;
    background: #e4e4e4;
    border-radius: 50%;
    box-shadow: 0 1px 2px rgba(0, 0, 0, 0.4);
}

.rew { margin-left: 88px; }
.play { margin-left: 66px; }
.ff { margin-left: 62px; }
.airplay { margin-left: 87px; }
.share { margin-left: 47px; }
.pip { margin-left: 50px; }

.player-bottom {
    display: flex;
    align-items: center;
    height: 44px;
    margin-top: 11px;
}

.time {
    width: 68px;
    color: #fff;
    font-size: 27px;
}

.scrub {
    position: relative;
    flex: 1;
    height: 7px;
    margin: 0 39px 0 29px;
    background: #e8e8e8;
    border-radius: 4px;
}

.scrub-head {
    position: absolute;
    right: -7px;
    top: -12px;
    width: 5px;
    height: 30px;
    background: #fff;
    border-radius: 2px;
}
```
